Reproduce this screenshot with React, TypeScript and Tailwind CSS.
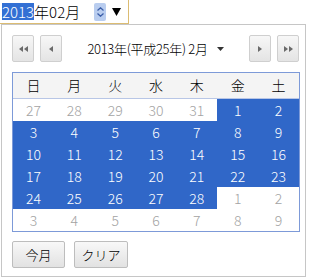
import { ReactNode } from 'react'

const weeks: { d: number; sel: boolean }[][] = [
  [27, 28, 29, 30, 31, 1, 2].map((d, i) => ({ d, sel: i >= 5 })),
  [3, 4, 5, 6, 7, 8, 9].map((d) => ({ d, sel: true })),
  [10, 11, 12, 13, 14, 15, 16].map((d) => ({ d, sel: true })),
  [17, 18, 19, 20, 21, 22, 23].map((d) => ({ d, sel: true })),
  [24, 25, 26, 27, 28, 1, 2].map((d, i) => ({ d, sel: i < 5 })),
  [3, 4, 5, 6, 7, 8, 9].map((d) => ({ d, sel: false })),
]

const dayNames = ['日', '月', '火', '水', '木', '金', '土']

function Tri({ dir }: { dir: 'l' | 'r' }) {
  return (
    <svg width="4" height="6" viewBox="0 0 4 6">
      <path d={dir === 'l' ? 'M4 0 L0 3 L4 6 Z' : 'M0 0 L4 3 L0 6 Z'} fill="#6a6a6a" />
    </svg>
  )
}

function NavButton({ children }: { children: ReactNode }) {
  return (
    <button
      type="button"
      className="flex h-[27px] w-[22px] items-center justify-center gap-[1px] rounded-[2px] border border-[#cfcfcf] bg-gradient-to-b from-[#f7f7f7] to-[#e4e4e4]"
    >
      {children}
    </button>
  )
}

export default function App() {
  return (
    <div className="h-[278px] w-[310px] bg-white font-['Noto_Sans_CJK_JP',sans-serif] font-light text-black">
      <div className="flex h-[24px] w-[129px] items-center border-r border-b border-[#dcbc72] pl-[2px]">
        <span className="flex h-[17px] items-center bg-[#3370d4] text-[15px] leading-none text-white">2013</span>
        <span className="text-[15px] leading-none">年02月</span>
        <div className="ml-[14px] flex h-[18px] w-[12px] flex-col items-center justify-center gap-[2px] rounded-[2px] bg-[#b9cdef]">
          <svg width="7" height="4" viewBox="0 0 7 4">
            <path d="M0.5 3.5 L3.5 0.8 L6.5 3.5" stroke="#3b5ea8" strokeWidth="1.3" fill="none" />
          </svg>
          <svg width="7" height="4" viewBox="0 0 7 4">
            <path d="M0.5 0.5 L3.5 3.2 L6.5 0.5" stroke="#3b5ea8" strokeWidth="1.3" fill="none" />
          </svg>
        </div>
        <svg className="ml-[6px]" width="9" height="8" viewBox="0 0 9 8">
          <path d="M0 0 H9 L4.5 8 Z" fill="#000" />
        </svg>
      </div>

      <div className="ml-[1px] h-[253px] w-[305px] border border-[#c6c6c6] bg-white pt-[10px] pr-[6px] pl-[10px]">
        <div className="flex items-center">
          <NavButton>
            <Tri dir="l" />
            <Tri dir="l" />
          </NavButton>
          <div className="ml-[6px]">
            <NavButton>
              <Tri dir="l" />
            </NavButton>
          </div>
          <div className="flex flex-1 items-center justify-center gap-[9px] text-[13px]">
            <span className="tracking-[-0.3px]">2013年(平成25年) 2月</span>
            <svg width="7" height="4" viewBox="0 0 7 4">
              <path d="M0 0 H7 L3.5 4 Z" fill="#333" />
            </svg>
          </div>
          <NavButton>
            <Tri dir="r" />
          </NavButton>
          <div className="ml-[6px]">
            <NavButton>
              <Tri dir="r" />
              <Tri dir="r" />
            </NavButton>
          </div>
        </div>

        <div className="mt-[10px] w-[288px] border border-[#7d9ad8]">
          <div className="grid h-[26px] grid-cols-7 items-center border-b border-[#b8c6e6] bg-[#f4f4f4] text-center text-[14px]">
            {dayNames.map((n) => (
              <span key={n}>{n}</span>
            ))}
          </div>
          {weeks.map((w, wi) => (
            <div key={wi} className="grid h-[22px] grid-cols-7 text-center text-[14px]">
              {w.map((c, ci) => (
                <span
                  key={ci}
                  className={
                    c.sel
                      ? 'flex items-center justify-center bg-[#3067c8] text-white'
                      : 'flex items-center justify-center text-[#a3a3a3]'
                  }
                >
                  {c.d}
                </span>
              ))}
            </div>
          ))}
        </div>

        <div className="mt-[9px] flex gap-[9px]">
          <button
            type="button"
            className="h-[27px] w-[53px] rounded-[2px] border border-[#bdbdbd] bg-gradient-to-b from-[#f8f8f8] to-[#e2e2e2] text-[13px]"
          >
            今月
          </button>
          <button
            type="button"
            className="h-[27px] w-[54px] rounded-[2px] border border-[#bdbdbd] bg-gradient-to-b from-[#f8f8f8] to-[#e2e2e2] text-[13px]"
          >
            クリア
          </button>
        </div>
      </div>
    </div>
  )
}
